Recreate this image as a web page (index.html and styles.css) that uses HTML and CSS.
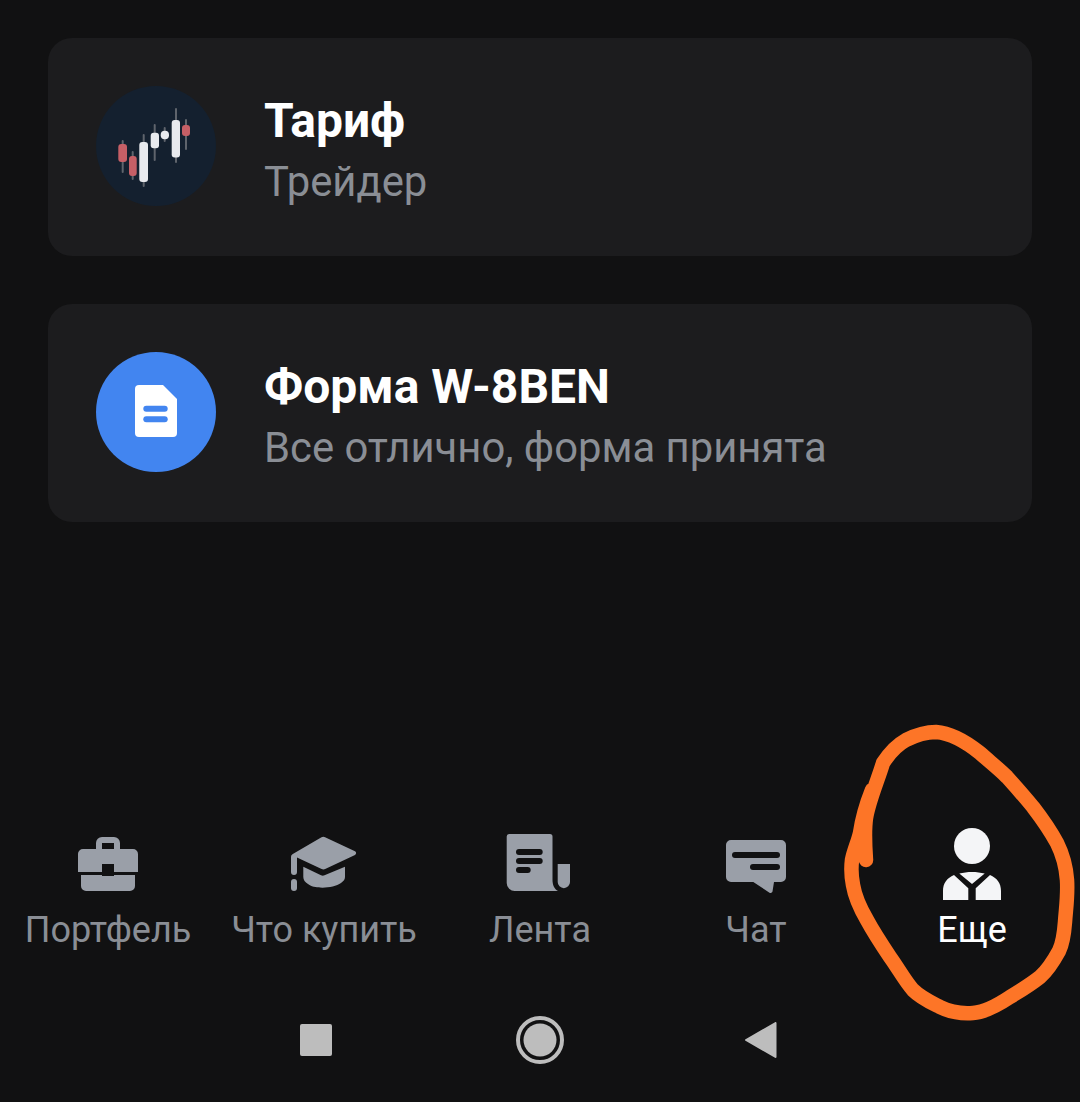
FILE: index.html
```html
<!DOCTYPE html>
<html lang="ru">
<head>
<meta charset="utf-8">
<title>Профиль</title>
<link rel="stylesheet" href="styles.css">
</head>
<body>
<div class="screen">
  <section class="card">
    <svg class="avatar" viewBox="0 0 120 120">
      <circle cx="60" cy="60" r="60" fill="#14202f"/>
      <g fill="#5f646c">
        <rect x="25.700" y="54" width="2" height="33" rx="1"/>
        <rect x="35.700" y="65" width="2" height="29" rx="1"/>
        <rect x="46.700" y="48" width="2" height="53" rx="1"/>
        <rect x="57.700" y="38" width="2" height="37" rx="1"/>
        <rect x="67.700" y="41" width="2" height="15" rx="1"/>
        <rect x="79" y="22" width="2" height="55" rx="1"/>
        <rect x="89" y="33" width="2" height="31" rx="1"/>
      </g>
      <g fill="#c65f66">
        <rect x="22.300" y="58" width="8.700" height="18" rx="3"/>
        <rect x="33" y="70" width="7.700" height="20" rx="3"/>
        <rect x="86" y="39" width="8" height="11" rx="3"/>
      </g>
      <g fill="#e8eaee">
        <rect x="43.300" y="56" width="8.700" height="40" rx="3"/>
        <rect x="54.700" y="46.700" width="8.300" height="15.500" rx="3"/>
        <rect x="64.700" y="44.700" width="8.300" height="8.600" rx="4"/>
        <rect x="75.700" y="34" width="8.300" height="37.500" rx="3"/>
      </g>
    </svg>
    <div class="card-text">
      <h2 class="card-title">Тариф</h2>
      <p class="card-sub">Трейдер</p>
    </div>
  </section>

  <section class="card">
    <svg class="avatar" viewBox="0 0 120 120">
      <circle cx="60" cy="60" r="60" fill="#4285f0"/>
      <path fill="#fff" d="M43 33H67L81 47V81a4 4 0 0 1-4 4H43a4 4 0 0 1-4-4V37a4 4 0 0 1 4-4Z"/>
      <rect x="47.300" y="53.700" width="24.400" height="6" rx="3" fill="#4285f0"/>
      <rect x="47.300" y="64.300" width="24.400" height="6" rx="3" fill="#4285f0"/>
    </svg>
    <div class="card-text">
      <h2 class="card-title">Форма W-8BEN</h2>
      <p class="card-sub">Все отлично, форма принята</p>
    </div>
  </section>

  <nav class="tabs">
    <div class="tab">
      <svg class="tab-icon" viewBox="0 0 72 72">
        <path fill="#9a9fa8" fill-rule="evenodd" d="M30 9H42a6 6 0 0 1 6 6V21H42V15H30V21H24V15a6 6 0 0 1 6-6Z"/>
        <path fill="#9a9fa8" d="M11 21H61a5 5 0 0 1 5 5V44H6V26a5 5 0 0 1 5-5ZM9 47H63V58a5 5 0 0 1-5 5H14a5 5 0 0 1-5-5Z"/>
        <rect x="30" y="36" width="12" height="12" fill="#111112"/>
      </svg>
      <span class="tab-label">Портфель</span>
    </div>
    <div class="tab">
      <svg class="tab-icon" viewBox="0 0 72 72">
        <path fill="#9a9fa8" d="M33.500 9.200a4 4 0 0 1 3.600 0L67 23.300a2 2 0 0 1 0 3.600L37.200 41a4 4 0 0 1-3.600 0L9 29.500V44a3 3 0 0 1-6 0V29a3 3 0 0 1 1.800-3Z"/>
        <rect x="3" y="51" width="6" height="12" rx="3" fill="#9a9fa8"/>
        <path fill="#9a9fa8" d="M15.300 38.700 33 47.200a4 4 0 0 0 3.500 0L57 38.700V49c0 3-2 4.500-4 6-8 6-28 6-33 1-3-2-4.700-4-4.700-7Z"/>
      </svg>
      <span class="tab-label">Что купить</span>
    </div>
    <div class="tab">
      <svg class="tab-icon" viewBox="0 0 72 72">
        <path fill="#9a9fa8" d="M5 6H46a2.500 2.500 0 0 1 2.500 2.500V52c0 5 2 9 5.500 11H11a8 8 0 0 1-8.300-8V8.500A2.500 2.500 0 0 1 5 6Z"/>
        <rect x="12" y="21" width="26.700" height="6" rx="3" fill="#111112"/>
        <rect x="12" y="30" width="26.700" height="6" rx="3" fill="#111112"/>
        <rect x="12" y="39" width="14.700" height="6" rx="3" fill="#111112"/>
        <path fill="#9a9fa8" d="M53.700 36H66V54a6 6 0 0 1-12.300 0Z"/>
      </svg>
      <span class="tab-label">Лента</span>
    </div>
    <div class="tab">
      <svg class="tab-icon" viewBox="0 0 72 72">
        <path fill="#9a9fa8" d="M11 12H61a5 5 0 0 1 5 5V49a5 5 0 0 1-5 5H54L52.500 63.500a2 2 0 0 1-3 1.200L33.300 54H11a5 5 0 0 1-5-5V17a5 5 0 0 1 5-5Z"/>
        <rect x="12" y="24" width="48" height="6" rx="3" fill="#111112"/>
        <rect x="30" y="36" width="30" height="6" rx="3" fill="#111112"/>
      </svg>
      <span class="tab-label">Чат</span>
    </div>
    <div class="tab tab-active">
      <svg class="tab-icon" viewBox="0 0 72 72">
        <circle cx="36" cy="18" r="18" fill="#f4f5f7"/>
        <path fill="#f4f5f7" d="M23.300 45.500C31 43.400 41 43.400 48.700 45.500L36 56ZM18 47 32.300 60.300V72H7V63C7 55 11 50 18 47ZM54 47 39.700 60.300V72H65V63C65 55 61 50 54 47Z"/>
      </svg>
      <span class="tab-label">Еще</span>
    </div>
  </nav>

  <div class="sysnav">
    <svg class="sys-square" viewBox="0 0 32 32"><rect width="32" height="32" rx="2" fill="#bdbdbd"/></svg>
    <svg class="sys-home" viewBox="0 0 48 48">
      <circle cx="24" cy="24" r="22" fill="none" stroke="#bdbdbd" stroke-width="4"/>
      <circle cx="24" cy="24" r="16.500" fill="#bdbdbd"/>
    </svg>
    <svg class="sys-back" viewBox="0 0 32 36"><path fill="#bdbdbd" stroke="#bdbdbd" stroke-width="2" stroke-linejoin="round" d="M1 18 30.500 1V35Z"/></svg>
  </div>

  <svg class="scribble" viewBox="0 0 1080 1102">
    <path fill="none" stroke="#fd7527" stroke-width="14.500" stroke-linecap="round" stroke-linejoin="round" d="M866 860C865 845 864 832 866 818C869 800 878 780 883 763C890 752 897 745 906 740C916 735 925 732 936 732C950 733 965 741 980 753C990 762 998 768 1007 777C1016 787 1024 796 1033 807C1043 820 1051 832 1057 843C1063 855 1066 866 1067 880C1068 895 1066 908 1065 922C1064 935 1063 943 1059 951C1053 962 1048 970 1040 977C1030 985 1020 991 1010 997C998 1005 986 1012 973 1013C960 1014 950 1012 940 1007C930 1002 921 998 913 990C905 981 898 968 890 957C882 945 874 933 867 920C860 908 855 897 853 885C851 875 851 868 852 860C854 850 858 842 860 833C862 820 866 805 872 790"/>
  </svg>
</div>
</body>
</html>
```
FILE: styles.css
```css
* { box-sizing: border-box; }
html, body { margin: 0; padding: 0; }
body {
  background: #111112;
  font-family: Roboto, "Noto Sans", sans-serif;
}
.screen {
  position: relative;
  display: flex;
  flex-direction: column;
  gap: 48px;
  height: 1102px;
  padding-top: 38px;
  overflow: hidden;
}
.card {
  display: flex;
  align-items: center;
  gap: 48px;
  height: 218px;
  margin: 0 48px;
  padding: 0 48px;
  background: #1c1c1e;
  border-radius: 24px;
}
.avatar { width: 120px; height: 120px; flex: none; margin-bottom: 2px; }
.card-text {
  display: flex;
  flex-direction: column;
  gap: 9px;
  padding-top: 8px;
}
.card-title {
  margin: 0;
  font-size: 48px;
  font-weight: 700;
  line-height: 52px;
  color: #fff;
}
.card-sub {
  margin: 0;
  font-size: 41.800px;
  font-weight: 400;
  line-height: 52px;
  color: #8a8e95;
}
.tabs {
  display: grid;
  grid-template-columns: repeat(5, 1fr);
  margin-top: auto;
  margin-bottom: 2px;
}
.tab {
  display: flex;
  flex-direction: column;
  align-items: center;
  gap: 8px;
}
.tab-icon { width: 72px; height: 72px; display: block; }
.tab-label {
  font-size: 36px;
  line-height: 44px;
  color: #8a8e95;
  white-space: nowrap;
}
.tab-active .tab-label { color: #fff; }
.sysnav {
  display: flex;
  align-items: center;
  gap: 184px;
  height: 76px;
  padding-left: 300px;
  margin-bottom: 24px;
}
.sys-square { width: 32px; height: 32px; }
.sys-home { width: 48px; height: 48px; }
.sys-back { width: 32px; height: 36px; margin-left: -3px; }
.scribble {
  position: absolute;
  inset: 0;
  width: 1080px;
  height: 1102px;
  pointer-events: none;
}
```
